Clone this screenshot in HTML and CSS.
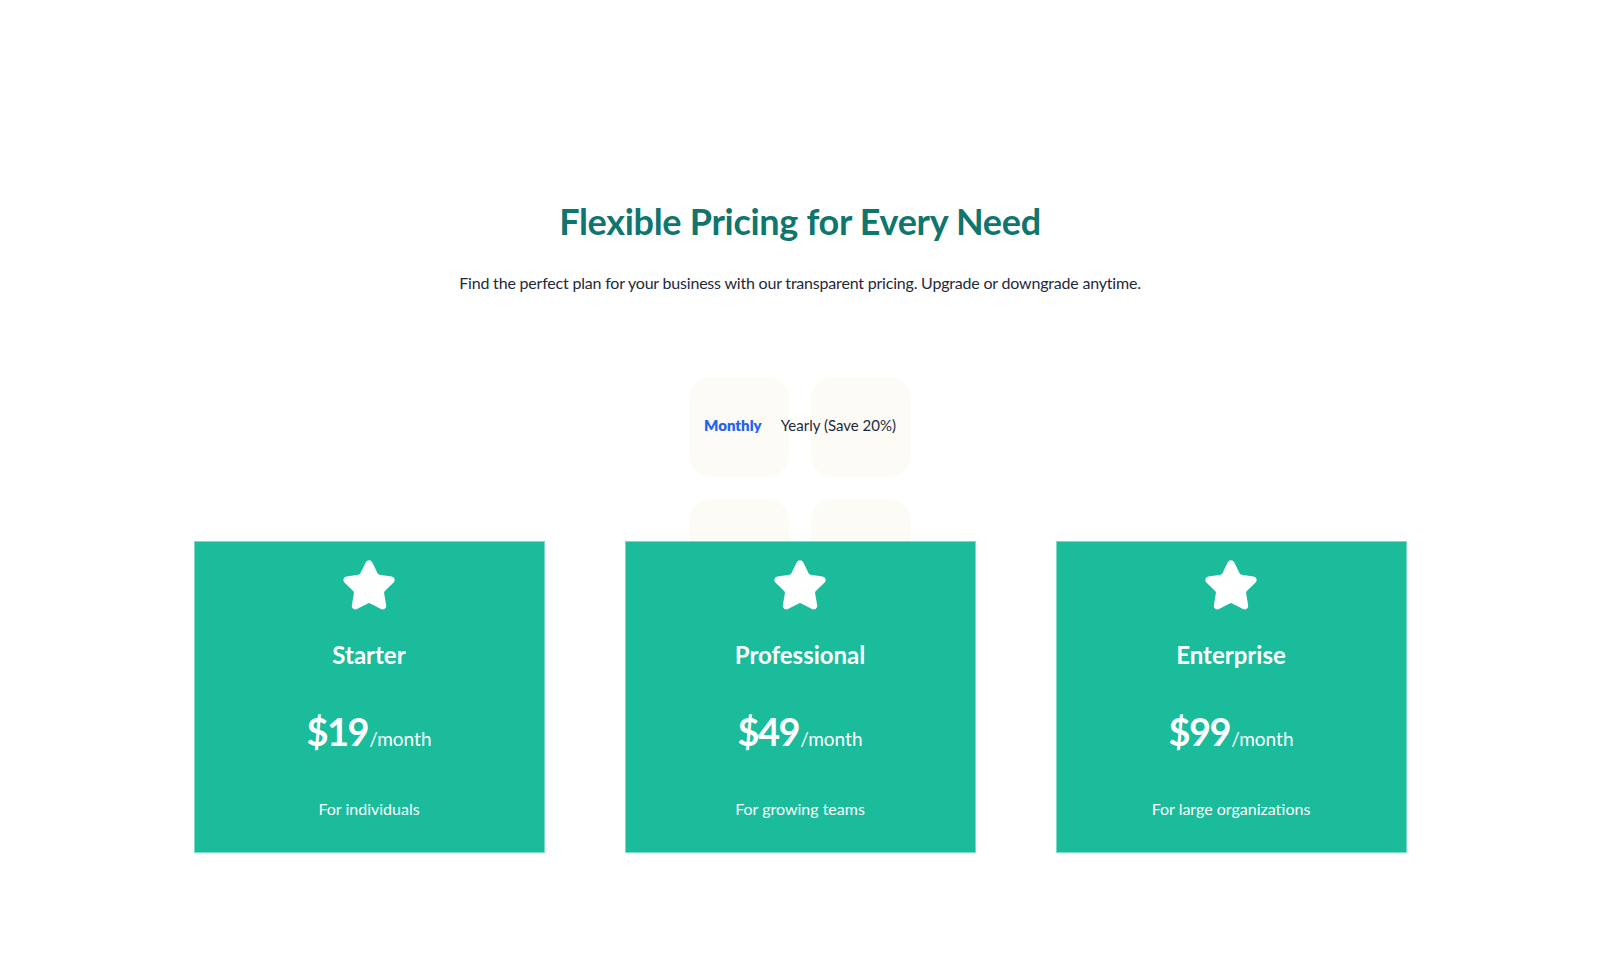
FILE: index.html
```html
<!DOCTYPE html>
<html lang="en">
<head>
<meta charset="utf-8">
<title>Pricing</title>
<link rel="stylesheet" href="styles.css">
</head>
<body>
<section class="pricing">
  <h1 class="title">Flexible Pricing for Every Need</h1>
  <p class="subtitle">Find the perfect plan for your business with our transparent pricing. Upgrade or downgrade anytime.</p>

  <div class="toggle">
    <div class="toggle-deco">
      <span></span><span></span><span></span><span></span>
    </div>
    <button class="toggle-btn active">Monthly</button>
    <button class="toggle-btn">Yearly (Save 20%)</button>
  </div>

  <div class="cards">
    <div class="card">
      <svg class="star" viewBox="0 0 24 24" width="56" height="56" aria-hidden="true"><path d="M11.525 2.295a.53.53 0 0 1 .95 0l2.31 4.679a2.123 2.123 0 0 0 1.595 1.16l5.166.756a.53.53 0 0 1 .294.904l-3.736 3.638a2.123 2.123 0 0 0-.611 1.878l.882 5.14a.53.53 0 0 1-.771.56l-4.618-2.428a2.122 2.122 0 0 0-1.973 0L6.396 21.010a.53.53 0 0 1-.77-.56l.881-5.139a2.122 2.122 0 0 0-.611-1.879L2.16 9.795a.53.53 0 0 1 .294-.906l5.165-.755a2.122 2.122 0 0 0 1.597-1.16z"/></svg>
      <h3 class="plan">Starter</h3>
      <div class="price"><span class="amount">$19</span><span class="per">/month</span></div>
      <p class="desc">For individuals</p>
    </div>
    <div class="card">
      <svg class="star" viewBox="0 0 24 24" width="56" height="56" aria-hidden="true"><path d="M11.525 2.295a.53.53 0 0 1 .95 0l2.31 4.679a2.123 2.123 0 0 0 1.595 1.16l5.166.756a.53.53 0 0 1 .294.904l-3.736 3.638a2.123 2.123 0 0 0-.611 1.878l.882 5.14a.53.53 0 0 1-.771.56l-4.618-2.428a2.122 2.122 0 0 0-1.973 0L6.396 21.010a.53.53 0 0 1-.77-.56l.881-5.139a2.122 2.122 0 0 0-.611-1.879L2.16 9.795a.53.53 0 0 1 .294-.906l5.165-.755a2.122 2.122 0 0 0 1.597-1.16z"/></svg>
      <h3 class="plan">Professional</h3>
      <div class="price"><span class="amount">$49</span><span class="per">/month</span></div>
      <p class="desc">For growing teams</p>
    </div>
    <div class="card">
      <svg class="star" viewBox="0 0 24 24" width="56" height="56" aria-hidden="true"><path d="M11.525 2.295a.53.53 0 0 1 .95 0l2.31 4.679a2.123 2.123 0 0 0 1.595 1.16l5.166.756a.53.53 0 0 1 .294.904l-3.736 3.638a2.123 2.123 0 0 0-.611 1.878l.882 5.14a.53.53 0 0 1-.771.56l-4.618-2.428a2.122 2.122 0 0 0-1.973 0L6.396 21.010a.53.53 0 0 1-.77-.56l.881-5.139a2.122 2.122 0 0 0-.611-1.879L2.16 9.795a.53.53 0 0 1 .294-.906l5.165-.755a2.122 2.122 0 0 0 1.597-1.16z"/></svg>
      <h3 class="plan">Enterprise</h3>
      <div class="price"><span class="amount">$99</span><span class="per">/month</span></div>
      <p class="desc">For large organizations</p>
    </div>
  </div>
</section>
</body>
</html>
```

FILE: styles.css
```css
html {
  background: #ffffff;
}

body {
  margin: 0;
  font-family: "Lato", "Liberation Sans", sans-serif;
  color: #1e293b;
}

.pricing {
  display: flex;
  flex-direction: column;
  align-items: center;
  padding-top: 199px;
  padding-bottom: 80px;
}

.title {
  margin: 0;
  font-size: 36px;
  line-height: 44px;
  font-weight: 700;
  color: #0f766e;
  letter-spacing: -0.3px;
}

.subtitle {
  margin: 28px 0 0;
  font-size: 16px;
  line-height: 24px;
  letter-spacing: -0.2px;
  color: #1e293b;
}

.toggle {
  position: relative;
  margin-top: 120px;
  display: flex;
  gap: 19px;
}

.toggle-deco {
  position: absolute;
  z-index: -1;
  top: -38px;
  left: 50%;
  transform: translateX(-50%);
  display: grid;
  grid-template-columns: 100px 100px;
  grid-auto-rows: 100px;
  gap: 22px;
}

.toggle-deco span {
  display: block;
  background: #fcfbf6;
  border-radius: 22px;
}

.toggle-btn {
  padding: 0;
  border: none;
  background: none;
  font-family: inherit;
  font-size: 15px;
  line-height: 20px;
  color: #1f2937;
  cursor: pointer;
}

.toggle-btn.active {
  color: #2563eb;
  font-weight: 800;
}

.cards {
  margin-top: 106px;
  display: flex;
  gap: 80px;
}

.card {
  width: 351px;
  box-sizing: border-box;
  background: #1abc9c;
  border: 1px solid #7ad9c6;
  padding: 16px 24px 31px;
  display: flex;
  flex-direction: column;
  align-items: center;
  color: #ffffff;
  text-align: center;
}

.star {
  display: block;
  fill: #ffffff;
  stroke: #ffffff;
  stroke-width: 2;
  stroke-linejoin: round;
  stroke-linecap: round;
}

.plan {
  margin: 25px 0 0;
  font-size: 24px;
  line-height: 32px;
  font-weight: 700;
}

.price {
  margin-top: 36px;
  line-height: 48px;
  display: flex;
  align-items: baseline;
}

.amount {
  font-size: 38px;
  font-weight: 700;
  letter-spacing: -1.5px;
}

.per {
  margin-left: 1px;
  font-size: 19px;
  font-weight: 400;
}

.desc {
  margin: 34px 0 0;
  font-size: 16px;
  line-height: 24px;
}
```
